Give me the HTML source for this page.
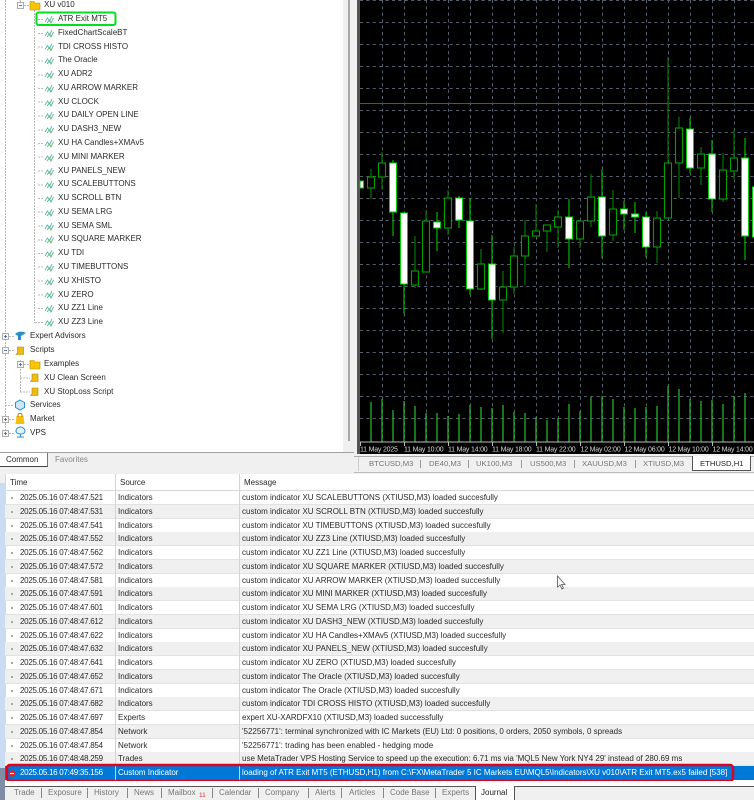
<!DOCTYPE html>
<html><head><meta charset="utf-8"><style>
html,body{margin:0;padding:0;background:#fff}
body{position:relative;width:754px;height:800px;overflow:hidden;font:8px/14px "Liberation Sans",sans-serif;color:#2a2a2a;filter:blur(.25px)}
.a{position:absolute}
.t{position:absolute;white-space:nowrap;height:14px;line-height:14px}
.r{position:absolute;left:5px;width:749px;height:14px;border-bottom:1px solid #e2e2e2;box-sizing:border-box}
.g{background:#f0f0f0}
.r span{position:absolute;top:0;white-space:nowrap;line-height:14px}
.c1{left:15px;letter-spacing:-.27px}.c2{left:113px}.c3{left:237px}
.r i{position:absolute;left:6px;top:6px;width:2px;height:2px;background:#a8a8a8}
.tab{position:absolute;top:786px;white-space:nowrap;color:#777;line-height:14px}
.sp{position:absolute;top:788px;width:1px;height:10px;background:#888}
.ct{position:absolute;top:457px;white-space:nowrap;color:#777;line-height:14px;font-size:7.7px}
.cs{position:absolute;top:460px;width:1px;height:8px;background:#999}
</style></head><body>

<!-- left grey panels -->
<div class="a" style="left:343px;top:0;width:17px;height:474px;background:#f0f0f0"></div>
<div class="a" style="left:348px;top:0;width:2px;height:441px;background:#a8a8a8"></div>
<div class="a" style="left:0;top:452px;width:354px;height:22px;background:#f0f0f0"></div>
<div class="a" style="left:0;top:452px;width:354px;height:1px;background:#a0a0a0"></div>
<div class="a" style="left:357px;top:0;width:3px;height:454px;background:#555"></div>
<div class="a" style="left:354px;top:454px;width:400px;height:20px;background:#f0f0f0"></div>
<div class="a" style="left:354px;top:456px;width:400px;height:1px;background:#aaa"></div>
<div class="a" style="left:354px;top:472px;width:400px;height:1px;background:#bbb"></div>
<div class="a" style="left:358px;top:457px;width:1px;height:14px;background:#ccc"></div>

<!-- tree + chart svg -->
<svg class="a" style="left:0;top:0" width="754" height="474" viewBox="0 0 754 474">
<defs>
<g id="ind" fill="none"><path d="M0 7L2.500 3L4.500 6L7 1" stroke="#55b8b8" stroke-width=".9"/><path d="M2 8L4.500 5L6 8L8.500 3" stroke="#5cb47a" stroke-width=".9"/></g>
<g id="fol"><path d="M0 1.500H4L5 3H10V10H0Z" fill="#f6c400" stroke="#b78f10" stroke-width=".6"/></g>
<g id="scr"><path d="M2 1H8V8.500H0.500L2 7Z" fill="#f0bb10" stroke="#a8830c" stroke-width=".6"/></g>
<g id="plus"><rect x=".5" y=".5" width="6" height="6" fill="#f6f6f6" stroke="#9a9a9a" stroke-width=".8"/><path d="M2 3.500H5M3.500 2V5" stroke="#3b5a9a" stroke-width=".8"/></g>
<g id="minus"><rect x=".5" y=".5" width="6" height="6" fill="#f6f6f6" stroke="#9a9a9a" stroke-width=".8"/><path d="M2 3.500H5" stroke="#3b5a9a" stroke-width=".8"/></g>
</defs>
<g fill="none" stroke="#b8b8b8" stroke-width="1" stroke-dasharray="2 1">
<path d="M5.500 0V433M34.500 10V323M20.500 0V6M20.500 360V392"/>
<path d="M24 5.500H30M9 336.500H14M9 350.500H14M5 405.500H14M9 419.500H14M9 433.500H14M24 364.500H30M20 378H30M20 392H30"/>
<path d="M38 19.500H44M38 33.500H44M38 47H44M38 61H44M38 75H44M38 88.500H44M38 102H44M38 116H44M38 130H44M38 143.500H44M38 157H44M38 171H44M38 185H44M38 198.500H44M38 212H44M38 226H44M38 240H44M38 253.500H44M38 267H44M38 281H44M38 295H44M38 308.500H44M35 322.500H44"/>
</g>
<use href="#minus" x="17" y="2"/><use href="#fol" x="30" y="0"/>
<use href="#ind" x="45" y="15"/><use href="#ind" x="45" y="29"/><use href="#ind" x="45" y="42.500"/><use href="#ind" x="45" y="56"/><use href="#ind" x="45" y="70"/><use href="#ind" x="45" y="84"/><use href="#ind" x="45" y="98"/><use href="#ind" x="45" y="111"/><use href="#ind" x="45" y="125"/><use href="#ind" x="45" y="139"/><use href="#ind" x="45" y="153"/><use href="#ind" x="45" y="167"/><use href="#ind" x="45" y="180"/><use href="#ind" x="45" y="194"/><use href="#ind" x="45" y="208"/><use href="#ind" x="45" y="222"/><use href="#ind" x="45" y="235"/><use href="#ind" x="45" y="249"/><use href="#ind" x="45" y="263"/><use href="#ind" x="45" y="277"/><use href="#ind" x="45" y="290"/><use href="#ind" x="45" y="304"/><use href="#ind" x="45" y="318"/>
<rect x="36.500" y="12.500" width="79" height="12.500" rx="2" fill="none" stroke="#00e01c" stroke-width="2"/>
<use href="#plus" x="2" y="333"/><use href="#minus" x="2" y="347"/><use href="#plus" x="17" y="361"/><use href="#plus" x="2" y="416"/><use href="#plus" x="2" y="430"/>
<path d="M15 334C18 331 22 331 26 333L21 336V340H18V336Z" fill="#2a8fc9"/>
<use href="#scr" x="15.500" y="346"/><use href="#fol" x="30" y="359"/><use href="#scr" x="30" y="373"/><use href="#scr" x="30" y="387"/>
<path d="M20 400L24.500 402.500V407.500L20 410L15.500 407.500V402.500Z" fill="#cfe6f6" stroke="#2a8fc9"/>
<path d="M16.500 416H23.500L24.500 424H15.500Z" fill="#f5bf10"/><path d="M18 417V415C18 413 22 413 22 415V417" fill="none" stroke="#a8830c"/>
<path d="M16 431C16 428 19 427 20.500 427C23 427 25 429 25 431C25 433 23 434 20.500 434C18 434 16 433 16 431ZM20.500 434V437M17 437H24" fill="#e4f2fb" stroke="#2a8fc9"/>

<!-- chart -->
<rect x="360" y="0" width="394" height="454" fill="#000"/>
<g stroke="#566070" stroke-width="1" stroke-dasharray="3 3.4" fill="none">
<path d="M382.500 0V442M404.500 0V442M426.500 0V442M448.500 0V442M470.500 0V442M492.500 0V442M514.500 0V442M536.500 0V442M558.500 0V442M580.500 0V442M602.500 0V442M624.500 0V442M646.500 0V442M668.500 0V442M690.500 0V442M712.500 0V442M734.500 0V442"/>
<path d="M360 0.500H754M360 22.500H754M360 44.500H754M360 66.500H754M360 88.500H754M360 110.500H754M360 132.500H754M360 154.500H754M360 176.500H754M360 198.500H754M360 220.500H754M360 242.500H754M360 264.500H754M360 286.500H754M360 308.500H754M360 330.500H754M360 352.500H754M360 374.500H754M360 396.500H754M360 418.500H754"/>
</g>
<path d="M360 103.500H754" stroke="#4e545c"/>
<!-- volumes -->
<path stroke="#26b326" stroke-width="1.300" fill="none" d="M371 402V442M382 399V442M393 410V442M404 401V442M415 406V442M426 413V442M437 413V442M448 416V442M459 414V442M470 405V442M481 407V442M492 408V442M503 405V442M514 412V442M525 413V442M536 417V442M547 420V442M558 418V442M569 404V442M580 411V442M591 397V442M602 396V442M613 399V442M624 407V442M635 408V442M646 407V442M657 406V442M668 386V442M679 389V442M690 399V442M701 401V442M712 400V442M723 404V442M734 396V442M745 393V442"/>
<!-- wicks -->
<path stroke="#006f00" stroke-width="1.300" fill="none" d="M371 169V199M382 152V190M415 236V288M426 210V272M448 190V235M481 249V290M503 271V333M514 247V294M525 220V285M536 204V236M547 225V252M558 210V248M580 221V248M591 174V227M613 190V241M657 211V263M668 57V218M679 117V198M701 147V185M723 153V202M734 130V179"/>
<path stroke="#00a800" stroke-width="1.300" fill="none" d="M393 160V236M404 212V314M437 212V251M459 196V228M470 198V295M492 235V339M569 199V268M602 169V258M624 201V230M635 202V233M646 212V257M690 118V173M712 140V212M745 138V260"/>
<!-- hollow bodies -->
<g fill="#000" stroke="#00a000" stroke-width="1.100">
<rect x="367.500" y="177" width="7" height="11"/><rect x="378.500" y="163" width="7" height="14"/><rect x="411.500" y="271" width="7" height="14"/><rect x="422.500" y="221" width="7" height="51"/><rect x="444.500" y="198" width="7" height="30"/><rect x="477.500" y="264" width="7" height="25"/><rect x="499.500" y="287" width="7" height="13"/><rect x="510.500" y="256" width="7" height="31"/><rect x="521.500" y="236" width="7" height="20"/><rect x="532.500" y="231" width="7" height="5"/><rect x="543.500" y="225" width="7" height="6"/><rect x="554.500" y="217" width="7" height="10"/><rect x="576.500" y="221" width="7" height="18"/><rect x="587.500" y="197" width="7" height="24"/><rect x="609.500" y="209" width="7" height="26"/><rect x="653.500" y="218" width="7" height="29"/><rect x="664.500" y="163" width="7" height="55"/><rect x="675.500" y="128" width="7" height="35"/><rect x="697.500" y="154" width="7" height="14"/><rect x="719.500" y="170" width="7" height="29"/><rect x="730.500" y="158" width="7" height="13"/>
</g>
<!-- white bodies -->
<g fill="#fff" stroke="#00d400" stroke-width="1">
<rect x="360" y="181" width="3.500" height="7"/><rect x="389.500" y="163" width="7" height="49"/><rect x="400.500" y="213" width="7" height="71"/><rect x="433.500" y="222" width="7" height="6"/><rect x="455.500" y="198" width="7" height="22"/><rect x="466.500" y="221" width="7" height="68"/><rect x="488.500" y="264" width="7" height="36"/><rect x="565.500" y="217" width="7" height="22"/><rect x="598.500" y="197" width="7" height="39"/><rect x="620.500" y="209" width="7" height="5"/><rect x="631.500" y="214" width="7" height="3"/><rect x="642.500" y="217" width="7" height="30"/><rect x="686.500" y="129" width="7" height="39"/><rect x="708.500" y="154" width="7" height="45"/><rect x="741.500" y="158" width="7" height="78"/><rect x="752.500" y="187" width="4" height="50"/>
</g>
<path d="M360 442H754" stroke="#bbb"/>
<path d="M360.500 442V446M404.500 442V446M448.500 442V446M492.500 442V446M536.500 442V446M580.500 442V446M624.500 442V446M668.500 442V446M712.500 442V446" stroke="#bbb"/>
<g fill="#d8d8d8" font-family="Liberation Sans" font-size="7" letter-spacing="-.2">
<text x="360" y="451.500">11 May 2025</text><text x="404" y="451.500">11 May 10:00</text><text x="448" y="451.500">11 May 14:00</text><text x="492" y="451.500">11 May 18:00</text><text x="536" y="451.500">11 May 22:00</text><text x="580.500" y="451.500">12 May 02:00</text><text x="624.500" y="451.500">12 May 06:00</text><text x="668.500" y="451.500">12 May 10:00</text><text x="712.500" y="451.500">12 May 14:00</text>
</g>
</svg>

<!-- tree text -->
<div class="t" style="left:44px;top:-2px">XU v010</div>
<div class="t" style="left:58px;top:12px">ATR Exit MT5</div>
<div class="t" style="left:58px;top:26px">FixedChartScaleBT</div>
<div class="t" style="left:58px;top:39.500px">TDI CROSS HISTO</div>
<div class="t" style="left:58px;top:53px">The Oracle</div>
<div class="t" style="left:58px;top:67px">XU ADR2</div>
<div class="t" style="left:58px;top:81px">XU ARROW MARKER</div>
<div class="t" style="left:58px;top:95px">XU CLOCK</div>
<div class="t" style="left:58px;top:108px">XU DAILY OPEN LINE</div>
<div class="t" style="left:58px;top:122px">XU DASH3_NEW</div>
<div class="t" style="left:58px;top:136px">XU HA Candles+XMAv5</div>
<div class="t" style="left:58px;top:150px">XU MINI MARKER</div>
<div class="t" style="left:58px;top:164px">XU PANELS_NEW</div>
<div class="t" style="left:58px;top:177px">XU SCALEBUTTONS</div>
<div class="t" style="left:58px;top:191px">XU SCROLL BTN</div>
<div class="t" style="left:58px;top:205px">XU SEMA LRG</div>
<div class="t" style="left:58px;top:219px">XU SEMA SML</div>
<div class="t" style="left:58px;top:232px">XU SQUARE MARKER</div>
<div class="t" style="left:58px;top:246px">XU TDI</div>
<div class="t" style="left:58px;top:260px">XU TIMEBUTTONS</div>
<div class="t" style="left:58px;top:274px">XU XHISTO</div>
<div class="t" style="left:58px;top:288px">XU ZERO</div>
<div class="t" style="left:58px;top:301px">XU ZZ1 Line</div>
<div class="t" style="left:58px;top:315px">XU ZZ3 Line</div>
<div class="t" style="left:30px;top:329px">Expert Advisors</div>
<div class="t" style="left:30px;top:343px">Scripts</div>
<div class="t" style="left:44px;top:357px">Examples</div>
<div class="t" style="left:44px;top:370.500px">XU Clean Screen</div>
<div class="t" style="left:44px;top:384.500px">XU StopLoss Script</div>
<div class="t" style="left:30px;top:398px">Services</div>
<div class="t" style="left:30px;top:412px">Market</div>
<div class="t" style="left:30px;top:426px">VPS</div>

<!-- left tabs -->
<div class="a" style="left:0;top:453px;width:47px;height:13px;background:#fff;border-right:1px solid #777;border-bottom:1px solid #444"></div>
<div class="t" style="left:6px;top:452.500px">Common</div>
<div class="t" style="left:55px;top:452.500px;color:#888">Favorites</div>

<!-- chart tabs -->
<div class="ct" style="left:369px">BTCUSD,M3</div><div class="cs" style="left:420px"></div>
<div class="ct" style="left:429px">DE40,M3</div><div class="cs" style="left:468px"></div>
<div class="ct" style="left:476px">UK100,M3</div><div class="cs" style="left:521px"></div>
<div class="ct" style="left:530px">US500,M3</div><div class="cs" style="left:574px"></div>
<div class="ct" style="left:582px">XAUUSD,M3</div><div class="cs" style="left:635px"></div>
<div class="ct" style="left:643px">XTIUSD,M3</div>
<div class="a" style="left:692px;top:456px;width:57px;height:14px;background:#fff;border:1px solid #555;border-top:0;box-sizing:content-box"></div>
<div class="ct" style="left:700px;color:#222">ETHUSD,H1</div>

<!-- journal -->
<div class="a" style="left:0;top:474px;width:5px;height:9px;background:#f0f0f0"></div>
<div class="a" style="left:0;top:483px;width:5px;height:317px;background:#c9dcf2"></div>
<div class="a" style="left:0;top:768px;width:5px;height:32px;background:#7f8ea5"></div>
<div class="t" style="left:10px;top:476px">Time</div>
<div class="t" style="left:120px;top:476px">Source</div>
<div class="t" style="left:244px;top:476px">Message</div>
<div class="a" style="left:5px;top:490px;width:749px;height:1px;background:#d8d8d8"></div>
<div class="a" style="left:5px;top:474px;width:1px;height:312px;background:#d8d8d8"></div>

<div class="r" style="top:491px"><i></i><span class="c1">2025.05.16 07:48:47.521</span><span class="c2">Indicators</span><span class="c3">custom indicator XU SCALEBUTTONS (XTIUSD,M3) loaded succesfully</span></div>
<div class="r g" style="top:504.750px"><i></i><span class="c1">2025.05.16 07:48:47.531</span><span class="c2">Indicators</span><span class="c3">custom indicator XU SCROLL BTN (XTIUSD,M3) loaded succesfully</span></div>
<div class="r" style="top:518.500px"><i></i><span class="c1">2025.05.16 07:48:47.541</span><span class="c2">Indicators</span><span class="c3">custom indicator XU TIMEBUTTONS (XTIUSD,M3) loaded succesfully</span></div>
<div class="r g" style="top:532.250px"><i></i><span class="c1">2025.05.16 07:48:47.552</span><span class="c2">Indicators</span><span class="c3">custom indicator XU ZZ3 Line (XTIUSD,M3) loaded succesfully</span></div>
<div class="r" style="top:546px"><i></i><span class="c1">2025.05.16 07:48:47.562</span><span class="c2">Indicators</span><span class="c3">custom indicator XU ZZ1 Line (XTIUSD,M3) loaded succesfully</span></div>
<div class="r g" style="top:559.750px"><i></i><span class="c1">2025.05.16 07:48:47.572</span><span class="c2">Indicators</span><span class="c3">custom indicator XU SQUARE MARKER (XTIUSD,M3) loaded succesfully</span></div>
<div class="r" style="top:573.500px"><i></i><span class="c1">2025.05.16 07:48:47.581</span><span class="c2">Indicators</span><span class="c3">custom indicator XU ARROW MARKER (XTIUSD,M3) loaded succesfully</span></div>
<div class="r g" style="top:587.250px"><i></i><span class="c1">2025.05.16 07:48:47.591</span><span class="c2">Indicators</span><span class="c3">custom indicator XU MINI MARKER (XTIUSD,M3) loaded succesfully</span></div>
<div class="r" style="top:601px"><i></i><span class="c1">2025.05.16 07:48:47.601</span><span class="c2">Indicators</span><span class="c3">custom indicator XU SEMA LRG (XTIUSD,M3) loaded succesfully</span></div>
<div class="r g" style="top:614.750px"><i></i><span class="c1">2025.05.16 07:48:47.612</span><span class="c2">Indicators</span><span class="c3">custom indicator XU DASH3_NEW (XTIUSD,M3) loaded succesfully</span></div>
<div class="r" style="top:628.500px"><i></i><span class="c1">2025.05.16 07:48:47.622</span><span class="c2">Indicators</span><span class="c3">custom indicator XU HA Candles+XMAv5 (XTIUSD,M3) loaded succesfully</span></div>
<div class="r g" style="top:642.250px"><i></i><span class="c1">2025.05.16 07:48:47.632</span><span class="c2">Indicators</span><span class="c3">custom indicator XU PANELS_NEW (XTIUSD,M3) loaded succesfully</span></div>
<div class="r" style="top:656px"><i></i><span class="c1">2025.05.16 07:48:47.641</span><span class="c2">Indicators</span><span class="c3">custom indicator XU ZERO (XTIUSD,M3) loaded succesfully</span></div>
<div class="r g" style="top:669.750px"><i></i><span class="c1">2025.05.16 07:48:47.652</span><span class="c2">Indicators</span><span class="c3">custom indicator The Oracle (XTIUSD,M3) loaded succesfully</span></div>
<div class="r" style="top:683.500px"><i></i><span class="c1">2025.05.16 07:48:47.671</span><span class="c2">Indicators</span><span class="c3">custom indicator The Oracle (XTIUSD,M3) loaded succesfully</span></div>
<div class="r g" style="top:697.250px"><i></i><span class="c1">2025.05.16 07:48:47.682</span><span class="c2">Indicators</span><span class="c3">custom indicator TDI CROSS HISTO (XTIUSD,M3) loaded succesfully</span></div>
<div class="r" style="top:711px"><i></i><span class="c1">2025.05.16 07:48:47.697</span><span class="c2">Experts</span><span class="c3">expert XU-XARDFX10 (XTIUSD,M3) loaded successfully</span></div>
<div class="r g" style="top:724.750px"><i></i><span class="c1">2025.05.16 07:48:47.854</span><span class="c2">Network</span><span class="c3">'52256771': terminal synchronized with IC Markets (EU) Ltd: 0 positions, 0 orders, 2050 symbols, 0 spreads</span></div>
<div class="r" style="top:738.500px"><i></i><span class="c1">2025.05.16 07:48:47.854</span><span class="c2">Network</span><span class="c3">'52256771': trading has been enabled - hedging mode</span></div>
<div class="r g" style="top:752.250px"><i></i><span class="c1">2025.05.16 07:48:48.259</span><span class="c2">Trades</span><span class="c3">use MetaTrader VPS Hosting Service to speed up the execution: 6.71 ms via 'MQL5 New York NY4 29' instead of 280.69 ms</span></div>
<div class="r" style="top:766px;background:#0078d7;color:#fff;border:0"><span class="c1">2025.05.16 07:49:35.156</span><span class="c2">Custom Indicator</span><span class="c3">loading of ATR Exit MT5 (ETHUSD,H1) from C:\FX\MetaTrader 5 IC Markets EU\MQL5\Indicators\XU v010\ATR Exit MT5.ex5 failed [538]</span></div>

<div class="a" style="left:115px;top:474px;width:1px;height:306px;background:#d4d4d4"></div>
<div class="a" style="left:239px;top:474px;width:1px;height:306px;background:#d4d4d4"></div>

<svg class="a" style="left:0;top:560px" width="754" height="240" viewBox="0 560 754 240">
<rect x="7" y="765" width="726" height="16" rx="3" fill="none" stroke="#e2001a" stroke-width="2.500"/>
<circle cx="12" cy="773.500" r="3.200" fill="#e0242c"/><path d="M10 773.500H14" stroke="#fff"/>
<path d="M557.500 576V587L560 585L562 589L563.500 588L561.500 584.500H565Z" fill="#fff" stroke="#555" stroke-width=".8"/>
</svg>

<!-- bottom tabs -->
<div class="a" style="left:5px;top:781px;width:749px;height:5px;background:#fff"></div>
<div class="a" style="left:5px;top:786px;width:749px;height:14px;background:#f0f0f0"></div>
<div class="a" style="left:5px;top:786px;width:749px;height:1px;background:#555"></div>
<div class="tab" style="left:14px">Trade</div><div class="sp" style="left:41px"></div>
<div class="tab" style="left:48px">Exposure</div><div class="sp" style="left:87px"></div>
<div class="tab" style="left:94px">History</div><div class="sp" style="left:127px"></div>
<div class="tab" style="left:134px">News</div><div class="sp" style="left:161px"></div>
<div class="tab" style="left:168px">Mailbox</div><div class="tab" style="left:199px;top:789px;color:#d33;font-size:6.500px">11</div><div class="sp" style="left:212px"></div>
<div class="tab" style="left:219px">Calendar</div><div class="sp" style="left:258px"></div>
<div class="tab" style="left:265px">Company</div><div class="sp" style="left:308px"></div>
<div class="tab" style="left:315px">Alerts</div><div class="sp" style="left:341px"></div>
<div class="tab" style="left:349px">Articles</div><div class="sp" style="left:383px"></div>
<div class="tab" style="left:390px">Code Base</div><div class="sp" style="left:435px"></div>
<div class="tab" style="left:442px">Experts</div>
<div class="a" style="left:475px;top:786px;width:38px;height:14px;background:#fff;border-left:1px solid #555;border-right:1px solid #555"></div>
<div class="tab" style="left:481px;color:#222">Journal</div>
</body></html>
